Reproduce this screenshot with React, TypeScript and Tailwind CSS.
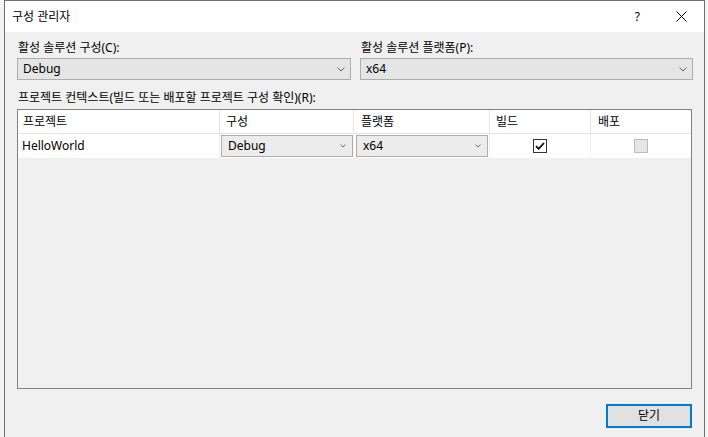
import React from 'react';

const font = { fontFamily: '"Segoe UI", "Noto Sans", "Noto Sans CJK KR", sans-serif' };

const Chevron = ({ small }: { small?: boolean }) =>
  small ? (
    <svg width="6" height="4" viewBox="0 0 6 4" className="shrink-0">
      <polyline points="0.5,0.5 3,3 5.5,0.5" fill="none" stroke="#707070" strokeWidth="1" />
    </svg>
  ) : (
    <svg width="8" height="5" viewBox="0 0 8 5" className="shrink-0">
      <polyline points="0.5,0.5 4,4 7.5,0.5" fill="none" stroke="#606060" strokeWidth="1" />
    </svg>
  );

const Combo = ({ value, className }: { value: string; className: string }) => (
  <div
    className={`flex items-center justify-between h-[22px] bg-[#e5e5e5] border border-[#adadad] pl-[5px] pr-[5px] text-[12px] text-black ${className}`}
  >
    <span>{value}</span>
    <Chevron />
  </div>
);

const CellCombo = ({ value }: { value: string }) => (
  <div className="flex items-center justify-between h-[22px] w-[132px] bg-[#ececec] border border-[#adadad] pl-[6px] pr-[6px] text-[12px] text-black">
    <span>{value}</span>
    <Chevron small />
  </div>
);

const headers = [
  { label: '프로젝트', w: 'w-[202px]', pl: 'pl-[5px]' },
  { label: '구성', w: 'w-[134px]', pl: 'pl-[6px]' },
  { label: '플랫폼', w: 'w-[136px]', pl: 'pl-[7px]' },
  { label: '빌드', w: 'w-[101px]', pl: 'pl-[6px]' },
  { label: '배포', w: 'flex-1', pl: 'pl-[7px]' },
];

export default function App() {
  return (
    <div className="w-[708px] h-[437px] overflow-hidden bg-[#f3f3f3]" style={font}>
      <div className="ml-[4px] w-[701px] h-[437px] border-x border-t border-[#707070] bg-[#f0f0f0] flex flex-col">
        {/* title bar */}
        <div className="h-[31px] bg-white flex items-center shrink-0">
          <span className="pl-[7px] text-[12px] text-black">구성 관리자</span>
          <span className="ml-auto text-[12px] text-black mr-[36px]">?</span>
          <svg width="11" height="11" viewBox="0 0 11 11" className="mr-[17px]">
            <path d="M0.5 0.5 L10.5 10.5 M10.5 0.5 L0.5 10.5" stroke="#000" strokeWidth="1" />
          </svg>
        </div>

        <div className="px-[12px] flex flex-col">
          {/* solution config / platform */}
          <div className="flex mt-[8px]">
            <div className="w-[334px] flex flex-col">
              <div className="h-[16px] leading-[16px] pl-[1px] text-[12px] text-black">활성 솔루션 구성(C):</div>
              <Combo value="Debug" className="mt-[2px] w-[334px]" />
            </div>
            <div className="ml-[9px] flex-1 flex flex-col">
              <div className="h-[16px] leading-[16px] pl-[1px] text-[12px] text-black">활성 솔루션 플랫폼(P):</div>
              <Combo value="x64" className="mt-[2px] pl-[4px] w-[333px]" />
            </div>
          </div>

          <div className="mt-[10px] h-[16px] leading-[16px] pl-[1px] text-[12px] text-black">
            프로젝트 컨텍스트(빌드 또는 배포할 프로젝트 구성 확인)(R):
          </div>

          {/* grid */}
          <div className="mt-[3px] h-[280px] border border-[#828282] bg-[#f0f0f0] flex flex-col">
            <div className="flex h-[24px] bg-white border-b border-[#e3e3e3]">
              {headers.map((h, i) => (
                <div
                  key={h.label}
                  className={`${h.w} ${h.pl} flex items-center text-[12px] text-black ${i < 4 ? 'border-r border-[#e5e5e5]' : ''}`}
                >
                  {h.label}
                </div>
              ))}
            </div>
            <div className="flex h-[24px] bg-white">
              <div className="w-[202px] pl-[4px] flex items-center text-[12px] text-black border-r border-[#f0f0f0]">
                HelloWorld
              </div>
              <div className="w-[134px] pl-[1px] flex items-center border-r border-[#f0f0f0]">
                <CellCombo value="Debug" />
              </div>
              <div className="w-[136px] pl-[2px] flex items-center border-r border-[#f0f0f0]">
                <CellCombo value="x64" />
              </div>
              <div className="w-[101px] flex items-center justify-center border-r border-[#f0f0f0]">
                <div className="w-[14px] h-[14px] border border-[#333333] bg-white flex items-center justify-center">
                  <svg width="12" height="12" viewBox="0 0 12 12">
                    <path d="M2 6.2 L4.6 8.8 L10 3" fill="none" stroke="#000" strokeWidth="1.7" />
                  </svg>
                </div>
              </div>
              <div className="flex-1 flex items-center justify-center">
                <div className="w-[14px] h-[14px] border border-[#bcbcbc] bg-[#e6e6e6]" />
              </div>
            </div>
          </div>

          {/* footer */}
          <div className="mt-[15px] flex justify-end">
            <button className="w-[86px] h-[24px] border-2 border-[#0078d7] bg-[#e1e1e1] text-[12px] text-black flex items-center justify-center">
              닫기
            </button>
          </div>
        </div>
      </div>
    </div>
  );
}
